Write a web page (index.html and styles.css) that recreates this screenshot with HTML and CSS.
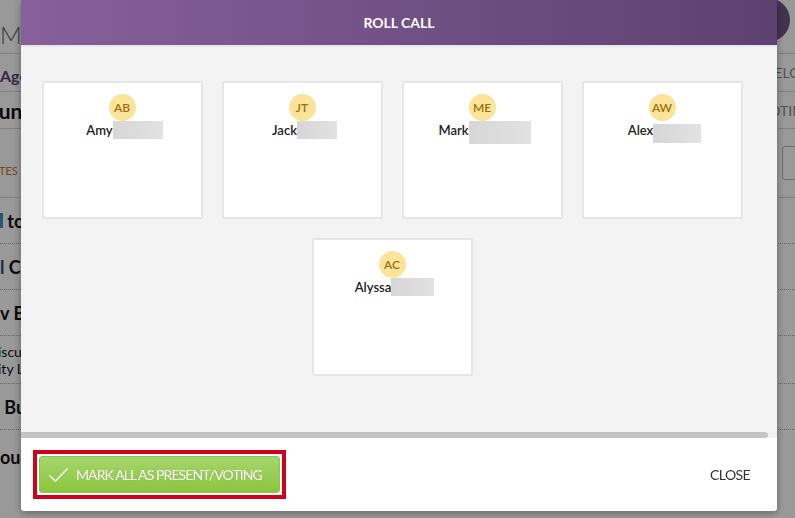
FILE: index.html
```html
<!DOCTYPE html>
<html lang="en">
  <head>
    <meta charset="UTF-8" />
    <title>Roll Call</title>
    <link rel="stylesheet" href="styles.css">
  </head>

  <body>
    <div class="page">
      <div class="page-row top-row">
        <span class="page-title">Marsh Creek Council</span>
        <span class="user-dot"></span>
      </div>
      <div class="page-row tab-row">
        <span class="tab-agenda">Agenda</span>
        <span class="side-label">WELCOME</span>
      </div>
      <div class="page-row meeting-row">
        <span class="meeting-name">Council Meeting</span>
        <span class="side-label">VOTING</span>
      </div>
      <div class="page-row notes-row">
        <span class="notes">TES SAVED</span>
        <span class="side-btn"></span>
      </div>
      <div class="page-row item-row"><span class="item"><span class="item-bar"></span> to Order</span></div>
      <div class="page-row item-row"><span class="item"><span class="item-mark">l</span> Call</span></div>
      <div class="page-row item-row"><span class="item">v Business</span></div>
      <div class="page-row item-row item-small"><span class="item">iscussion of<br>ity Lines</span></div>
      <div class="page-row item-row"><span class="item">&nbsp;Business</span></div>
      <div class="page-row item-row last-row"><span class="item">ourn</span></div>
    </div>

    <div class="backdrop"></div>

    <div class="modal">
      <div class="modal-head">ROLL CALL</div>
      <div class="modal-body">
        <div class="cards">
          <div class="card">
            <div class="avatar">AB</div>
            <div class="name">Amy<span class="redact" style="width: 50px; height: 18px"></span></div>
          </div>
          <div class="card">
            <div class="avatar">JT</div>
            <div class="name">Jack<span class="redact" style="width: 40px; height: 18px"></span></div>
          </div>
          <div class="card">
            <div class="avatar">ME</div>
            <div class="name">Mark<span class="redact" style="width: 62px; height: 23px"></span></div>
          </div>
          <div class="card">
            <div class="avatar">AW</div>
            <div class="name">Alex<span class="redact redact-low" style="width: 48px; height: 19px"></span></div>
          </div>
          <div class="card">
            <div class="avatar">AC</div>
            <div class="name">Alyssa<span class="redact" style="width: 43px; height: 18px"></span></div>
          </div>
        </div>
        <div class="hscroll"></div>
      </div>
      <div class="modal-foot">
        <div class="mark-wrap">
          <button class="mark-btn">
            <svg width="19" height="14" viewBox="0 0 19 14"><polyline points="0.5,7.5 6.5,13 18.5,0.5" fill="none" stroke="#fff" stroke-width="1.3"/></svg>
            MARK ALL AS PRESENT/VOTING
          </button>
        </div>
        <button class="close-btn">CLOSE</button>
      </div>
    </div>
  </body>
</html>
```

FILE: styles.css
```css
body {
  margin: 0;
  font-family: Lato, "Open Sans", sans-serif;
  background: #fff;
  overflow: hidden;
  height: 518px;
}

/* page under the dialog */

.page {
  width: 795px;
}

.page-row {
  display: grid;
  grid-template-columns: 1fr 40px;
  align-items: center;
  border-bottom: 1px solid #d8d8d8;
  white-space: nowrap;
}

.top-row {
  height: 53px;
  align-items: start;
}

.page-title {
  font-size: 24px;
  font-weight: 300;
  color: #666;
  padding-top: 20px;
}

.user-dot {
  display: block;
  width: 44px;
  height: 44px;
  margin: -2px 0 0 -9px;
  border-radius: 50%;
  background: #6f5684;
}

.tab-row {
  height: 37px;
}

.tab-agenda {
  font-size: 16px;
  color: #5b3f7c;
  font-weight: bold;
  padding-top: 6px;
}

.side-label {
  font-size: 14px;
  color: #888;
  margin-left: 5px;
}

.meeting-row {
  height: 36px;
}

.meeting-name {
  font-size: 21px;
  font-weight: bold;
  color: #111;
  margin-left: -27px;
}

.notes-row {
  height: 68px;
}

.notes {
  font-size: 11px;
  color: #d0731a;
  margin-left: -1px;
  padding-top: 14px;
}

.side-btn {
  display: block;
  width: 40px;
  height: 32px;
  margin-left: 27px;
  border: 1px solid #bbb;
  border-radius: 3px;
}

.item-row {
  height: 45px;
  border-bottom: 1px dotted #aaa;
}

.item {
  font-size: 18px;
  font-weight: bold;
  color: #111;
}

.item-bar {
  display: inline-block;
  width: 3px;
  height: 15px;
  background: #3d8fc6;
}

.item-mark {
  color: #1e4f84;
}

.item-small {
  height: 47px;
}

.item-small .item {
  font-size: 14px;
  font-weight: normal;
  line-height: 17px;
  margin-left: -2px;
}

.last-row {
  height: 54px;
  border-bottom: none;
}

.backdrop {
  position: fixed;
  inset: 0;
  background: rgba(0, 0, 0, 0.4);
}

/* dialog */

.modal {
  position: fixed;
  left: 21px;
  top: 0;
  width: 756px;
  height: 511px;
  display: flex;
  flex-direction: column;
  background: #fff;
  box-shadow: 0 2px 8px rgba(0, 0, 0, 0.35);
  border-radius: 0 0 3px 3px;
}

.modal-head {
  height: 45px;
  display: flex;
  align-items: center;
  justify-content: center;
  background: linear-gradient(to right, #87609b, #5d4170);
  color: #fff;
  font-weight: bold;
  font-size: 14px;
}

.modal-body {
  flex: 1;
  display: flex;
  flex-direction: column;
  background: #f3f3f3;
  border-top: 2px solid #e8e8e8;
}

.cards {
  flex: 1;
  display: flex;
  flex-wrap: wrap;
  justify-content: center;
  align-content: flex-start;
  gap: 19px;
  width: 702px;
  padding: 34px 0 0 20px;
}

.card {
  box-sizing: border-box;
  width: 161px;
  height: 138px;
  background: #fff;
  border: 2px solid #e6e6e6;
  border-radius: 2px;
  padding-top: 11px;
  text-align: center;
}

.avatar {
  width: 27px;
  height: 27px;
  margin: 0 auto;
  border-radius: 50%;
  background: #fbe39a;
  color: #96720a;
  font-size: 12px;
  font-weight: 600;
  line-height: 27px;
}

.name {
  font-size: 13px;
  font-weight: 600;
  color: #222;
  line-height: 18px;
  white-space: nowrap;
  padding-left: 5px;
}

.redact {
  display: inline-block;
  vertical-align: top;
  background: linear-gradient(to right, #d6d6d6, #e2e2e2);
}

.redact-low {
  margin-top: 3px;
}

.hscroll {
  width: 747px;
  height: 6px;
  background: #c4c4c4;
  border-radius: 0 3px 3px 0;
}

.modal-foot {
  height: 73px;
  display: flex;
  align-items: center;
  justify-content: space-between;
  padding: 0 27px 0 12px;
}

.mark-wrap {
  border: 4px solid #d0021b;
  padding: 2px;
  background: #fff;
}

.mark-btn {
  display: flex;
  align-items: center;
  gap: 8px;
  width: 241px;
  height: 37px;
  padding: 0 0 0 9px;
  border: 1px solid #8fc14d;
  border-radius: 3px;
  background: linear-gradient(#a6d56c, #8cc53f);
  color: #fff;
  font-family: Lato, sans-serif;
  font-size: 14px;
  letter-spacing: -0.9px;
  text-shadow: 0 0 1px rgba(0, 0, 0, 0.2);
  cursor: pointer;
}

.close-btn {
  border: none;
  background: none;
  padding: 0;
  font-family: Lato, sans-serif;
  font-size: 14px;
  color: #333;
  letter-spacing: -0.6px;
  cursor: pointer;
}
```
